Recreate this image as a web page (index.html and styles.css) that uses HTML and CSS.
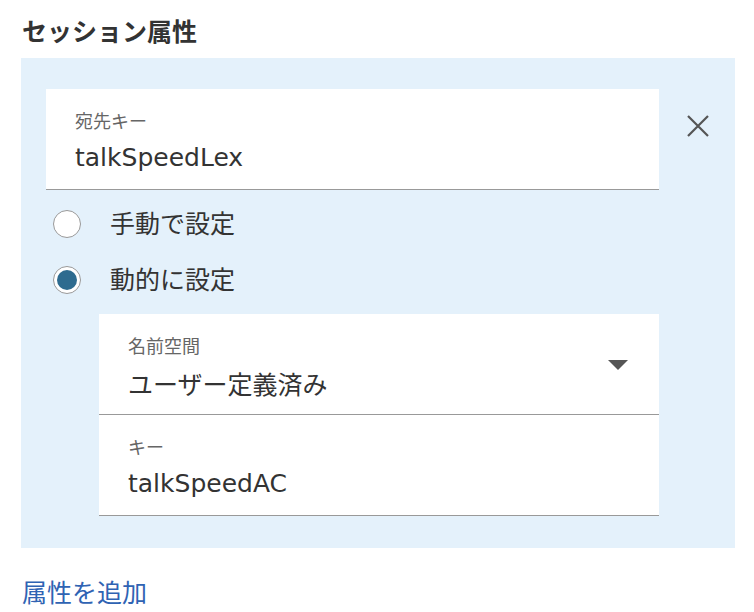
FILE: index.html
```html
<!DOCTYPE html>
<html lang="ja">
<head>
<meta charset="utf-8">
<link rel="stylesheet" href="styles.css">
</head>
<body>
<div class="page">
  <h2 class="title">セッション属性</h2>
  <div class="panel">
    <div class="panel-body">
      <div class="field field-top">
        <div class="label">宛先キー</div>
        <div class="value latin">talkSpeedLex</div>
      </div>
      <div class="radios">
        <div class="radio-row">
          <span class="radio"></span>
          <span class="radio-text">手動で設定</span>
        </div>
        <div class="radio-row">
          <span class="radio checked"></span>
          <span class="radio-text">動的に設定</span>
        </div>
      </div>
      <div class="subbox">
        <div class="field select">
          <div class="field-main">
            <div class="label">名前空間</div>
            <div class="value">ユーザー定義済み</div>
          </div>
          <span class="caret"></span>
        </div>
        <div class="field">
          <div class="label">キー</div>
          <div class="value latin">talkSpeedAC</div>
        </div>
      </div>
    </div>
    <button class="close" aria-label="close">
      <svg width="22" height="22" viewBox="0 0 22 22"><path d="M1 1 L21 21 M21 1 L1 21" stroke="#555" stroke-width="2.2" fill="none"/></svg>
    </button>
  </div>
  <a class="add-link" href="#">属性を追加</a>
</div>
</body>
</html>
```
FILE: styles.css
```css
html, body {
  margin: 0;
  padding: 0;
  background: #ffffff;
}
body {
  font-family: "Noto Sans CJK JP", sans-serif;
  color: #333333;
}
.page {
  padding: 10px 19px 0 21px;
}
.title {
  margin: 0 0 8px 1px;
  font-size: 25px;
  line-height: 40px;
  font-weight: bold;
  color: #333333;
}
.panel {
  display: flex;
  align-items: flex-start;
  background: #e4f1fb;
  padding: 31px 0 32px 25px;
}
.panel-body {
  width: 613px;
  display: flex;
  flex-direction: column;
}
.field {
  background: #ffffff;
  border-bottom: 1px solid #999999;
  height: 100px;
  padding: 19px 29px 0 29px;
  box-sizing: content-box;
}
.field-top {
  height: 81px;
}
.subbox {
  margin-left: 53px;
  margin-top: 6px;
  display: flex;
  flex-direction: column;
}
.subbox .field {
  height: 81px;
}
.label {
  font-size: 18px;
  line-height: 24px;
  color: #666666;
}
.value {
  font-size: 25px;
  line-height: 38px;
  margin-top: 7px;
  color: #333333;
}
.latin {
  font-family: "DejaVu Sans", "Noto Sans CJK JP", sans-serif;
  font-size: 25px;
}
.select {
  display: flex;
  justify-content: space-between;
  align-items: flex-start;
  padding-right: 31px;
}
.caret {
  width: 0;
  height: 0;
  margin-top: 27px;
  border-left: 10px solid transparent;
  border-right: 10px solid transparent;
  border-top: 10px solid #555555;
}
.radios {
  margin-top: 6px;
  display: flex;
  flex-direction: column;
}
.radio-row {
  height: 56px;
  display: flex;
  align-items: center;
  padding-left: 7px;
}
.radio {
  width: 26px;
  height: 26px;
  border: 1px solid #999999;
  border-radius: 50%;
  background: #ffffff;
  box-sizing: content-box;
  display: flex;
  align-items: center;
  justify-content: center;
  margin-right: 29px;
}
.radio.checked::after {
  content: "";
  width: 20px;
  height: 20px;
  border-radius: 50%;
  background: #2e6b8f;
}
.radio-text {
  font-size: 25px;
  line-height: 36px;
  padding-bottom: 4px;
  color: #333333;
}
.close {
  margin: 26px 0 0 28px;
  padding: 0;
  border: 0;
  background: transparent;
  width: 22px;
  height: 22px;
  display: flex;
}
.add-link {
  display: block;
  margin-top: 25px;
  margin-left: 1px;
  font-size: 25px;
  line-height: 36px;
  color: #2f63b3;
  text-decoration: none;
}
```
